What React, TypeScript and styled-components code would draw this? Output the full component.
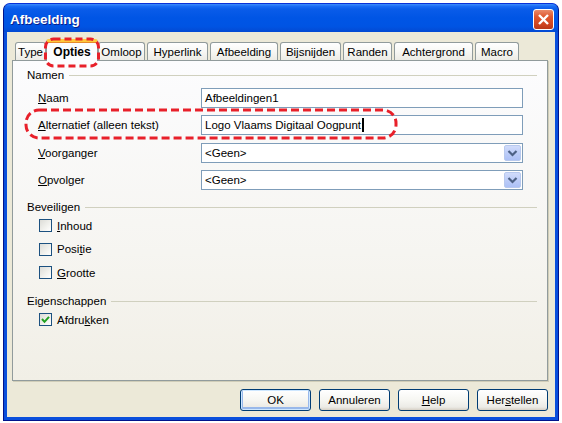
import React from "react";
import styled, { createGlobalStyle, css } from "styled-components";

const Global = createGlobalStyle`
  html, body { margin: 0; padding: 0; background: #ffffff; }
  body { font-family: "Liberation Sans", Arial, sans-serif; font-size: 11.5px; color: #000; }
  * { box-sizing: border-box; }
`;

const Page = styled.div`
  position: relative;
  width: 562px;
  height: 423px;
  padding: 3px;
`;

const Window = styled.div`
  width: 556px;
  height: 418px;
  display: flex;
  flex-direction: column;
  border-radius: 7px 7px 0 0;
  background: #0a4fdc;
  border: 1px solid #00138c;
  border-top-color: #0831d9;
  overflow: hidden;
`;

const TitleBar = styled.div`
  height: 28px;
  flex: none;
  display: flex;
  align-items: center;
  justify-content: space-between;
  padding: 0 4px 0 6px;
  background: linear-gradient(
    180deg,
    #3d8cfb 0%,
    #1a6cf5 8%,
    #0a5ce9 18%,
    #0055e5 50%,
    #0054e3 80%,
    #0349d2 100%
  );
`;

const Title = styled.span`
  font-family: "Liberation Sans", Arial, sans-serif;
  font-weight: bold;
  font-size: 13.5px;
  color: #ffffff;
  text-shadow: 1px 1px 0 #0a1e8a;
  padding-top: 3px;
`;

const CloseButton = styled.div`
  width: 21px;
  height: 21px;
  border: 1px solid #ffffff;
  border-radius: 3px;
  background: linear-gradient(180deg, #e98a6a 0%, #e0582f 35%, #cf4521 75%, #b8381a 100%);
  display: flex;
  align-items: center;
  justify-content: center;
  margin-top: 3px;
`;

const Body = styled.div`
  flex: 1;
  margin: 0 3px 3px 3px;
  background: #ece9d8;
  display: flex;
  flex-direction: column;
  padding: 7px 7px 6px 5px;
`;

const TabStrip = styled.div`
  height: 21px;
  display: flex;
  align-items: flex-end;
  gap: 2px;
  padding-left: 3px;
  flex: none;
`;

const Tab = styled.div<{ $w: number; $active?: boolean }>`
  width: ${(p) => p.$w}px;
  height: 18px;
  display: flex;
  align-items: center;
  justify-content: center;
  border: 1px solid #919b9c;
  border-bottom: none;
  border-radius: 3px 3px 0 0;
  background: linear-gradient(180deg, #ffffff 0%, #f7f7f4 50%, #ecebe5 100%);
  white-space: nowrap;
  font-size: 11.5px;
  padding-top: 1px;
  ${(p) =>
    p.$active &&
    css`
      position: relative;
      z-index: 2;
      height: 22px;
      margin: 0 -2px -1px -2px;
      width: ${p.$w + 4}px;
      border-top: 3px solid #ffc83c;
      box-shadow: inset 0 1px 0 #e68b2c;
      background: #fcfcfe;
      font-weight: bold;
      font-size: 12px;
      padding-top: 0;
    `}
`;

const Panel = styled.div`
  height: 321px;
  flex: none;
  border: 1px solid #919b9c;
  box-shadow: 1px 1px 0 #d0cdb8;
  background: linear-gradient(180deg, #fcfcfe 0%, #f6f5f1 60%, #f1efe6 100%);
  padding: 7px 10px 0 14px;
  display: flex;
  flex-direction: column;
`;

const Header = styled.div<{ $top?: number }>`
  height: 14px;
  display: flex;
  align-items: center;
  gap: 5px;
  margin-top: ${(p) => p.$top ?? 0}px;
  &::after {
    content: "";
    flex: 1;
    height: 1px;
    background: #d0d0bf;
    margin-top: 1px;
  }
`;

const FieldGrid = styled.div`
  margin-top: 6px;
  display: grid;
  grid-template-columns: 163px 1fr;
  row-gap: 7.33px;
  padding: 0 14px 0 11px;
  align-items: center;
`;

const Label = styled.span`
  white-space: nowrap;
`;

const TextInput = styled.div`
  height: 20px;
  border: 1px solid #7f9db9;
  background: #ffffff;
  display: flex;
  align-items: center;
  padding: 0 3px;
  white-space: nowrap;
`;

const Caret = styled.span`
  display: inline-block;
  width: 2px;
  height: 14px;
  background: #000;
  margin-left: 1px;
`;

const Select = styled(TextInput)`
  justify-content: space-between;
  padding: 0 1px 0 3px;
`;

const DropButton = styled.div`
  width: 17px;
  height: 16px;
  border: 1px solid #b8c9ee;
  border-radius: 2px;
  background: linear-gradient(180deg, #d1dcfb 0%, #bdcdf8 50%, #adc1f6 100%);
  display: flex;
  align-items: center;
  justify-content: center;
`;

const CheckRow = styled.div`
  height: 23.5px;
  display: flex;
  align-items: center;
  gap: 5px;
  padding-left: 12px;
`;

const Box = styled.div`
  width: 13px;
  height: 13px;
  border: 1px solid #1c5180;
  background: linear-gradient(135deg, #dcdcd7 0%, #f2f2ee 60%, #ffffff 100%);
  display: flex;
  align-items: center;
  justify-content: center;
`;

const ButtonRow = styled.div`
  margin-top: 8px;
  display: flex;
  justify-content: flex-end;
  gap: 8px;
`;

const Button = styled.div<{ $default?: boolean }>`
  width: 71px;
  height: 22px;
  border: 1px solid #003c74;
  border-radius: 3px;
  background: linear-gradient(180deg, #ffffff 0%, #f6f6f2 50%, #ecebe6 85%, #d6d0c5 100%);
  display: flex;
  align-items: center;
  justify-content: center;
  font-size: 11.5px;
  ${(p) =>
    p.$default &&
    css`
      box-shadow: inset 0 0 0 1px #cee7ff, inset 0 -1px 0 2px #98b8ea;
    `}
`;

const Overlay = styled.svg`
  position: absolute;
  left: 0;
  top: 0;
  pointer-events: none;
  z-index: 10;
`;

const Chevron = () => (
  <svg width="11" height="8" viewBox="0 0 11 8">
    <polyline points="1.5,2 5.5,6 9.5,2" fill="none" stroke="#4d6185" strokeWidth="2.2" />
  </svg>
);

const Tick = () => (
  <svg width="11" height="11" viewBox="0 0 11 11">
    <path d="M2 5 L4.5 7.8 L9 2.8" fill="none" stroke="#21a121" strokeWidth="2" />
  </svg>
);

const tabs: { label: string; w: number; active?: boolean }[] = [
  { label: "Type", w: 31 },
  { label: "Opties", w: 48, active: true },
  { label: "Omloop", w: 47 },
  { label: "Hyperlink", w: 61 },
  { label: "Afbeelding", w: 68 },
  { label: "Bijsnijden", w: 61 },
  { label: "Randen", w: 49 },
  { label: "Achtergrond", w: 79 },
  { label: "Macro", w: 44 },
];

export default function App() {
  return (
    <>
      <Global />
      <Page>
        <Window>
          <TitleBar>
            <Title>Afbeelding</Title>
            <CloseButton>
              <svg width="13" height="13" viewBox="0 0 13 13">
                <path d="M2 2 L11 11 M11 2 L2 11" stroke="#ffffff" strokeWidth="2.4" />
              </svg>
            </CloseButton>
          </TitleBar>
          <Body>
            <TabStrip>
              {tabs.map((t) => (
                <Tab key={t.label} $w={t.w} $active={t.active}>
                  {t.label}
                </Tab>
              ))}
            </TabStrip>
            <Panel>
              <Header>Namen</Header>
              <FieldGrid>
                <Label>
                  <u>N</u>aam
                </Label>
                <TextInput>Afbeeldingen1</TextInput>
                <Label>
                  <u>A</u>lternatief (alleen tekst)
                </Label>
                <TextInput>
                  Logo Vlaams Digitaal Oogpunt
                  <Caret />
                </TextInput>
                <Label>
                  <u>V</u>oorganger
                </Label>
                <Select>
                  <span>&lt;Geen&gt;</span>
                  <DropButton>
                    <Chevron />
                  </DropButton>
                </Select>
                <Label>
                  <u>O</u>pvolger
                </Label>
                <Select>
                  <span>&lt;Geen&gt;</span>
                  <DropButton>
                    <Chevron />
                  </DropButton>
                </Select>
              </FieldGrid>
              <Header $top={10}>Beveiligen</Header>
              <CheckRow>
                <Box />
                <span>
                  <u>I</u>nhoud
                </span>
              </CheckRow>
              <CheckRow>
                <Box />
                <span>
                  Posi<u>t</u>ie
                </span>
              </CheckRow>
              <CheckRow>
                <Box />
                <span>
                  <u>G</u>rootte
                </span>
              </CheckRow>
              <Header $top={9.5}>Eigenschappen</Header>
              <CheckRow>
                <Box>
                  <Tick />
                </Box>
                <span>
                  Afdru<u>k</u>ken
                </span>
              </CheckRow>
            </Panel>
            <ButtonRow>
              <Button $default>OK</Button>
              <Button>Annuleren</Button>
              <Button>
                <u>H</u>elp
              </Button>
              <Button>
                Her<u>s</u>tellen
              </Button>
            </ButtonRow>
          </Body>
        </Window>
        <Overlay width="562" height="423" viewBox="0 0 562 423">
          <rect
            x="45.5"
            y="39"
            width="53"
            height="27"
            rx="8"
            fill="none"
            stroke="#e8202a"
            strokeWidth="3"
            strokeDasharray="7 4"
          />
          <rect
            x="26"
            y="110"
            width="370"
            height="28"
            rx="13"
            fill="none"
            stroke="#e8202a"
            strokeWidth="3"
            strokeDasharray="8 4"
          />
        </Overlay>
      </Page>
    </>
  );
}
